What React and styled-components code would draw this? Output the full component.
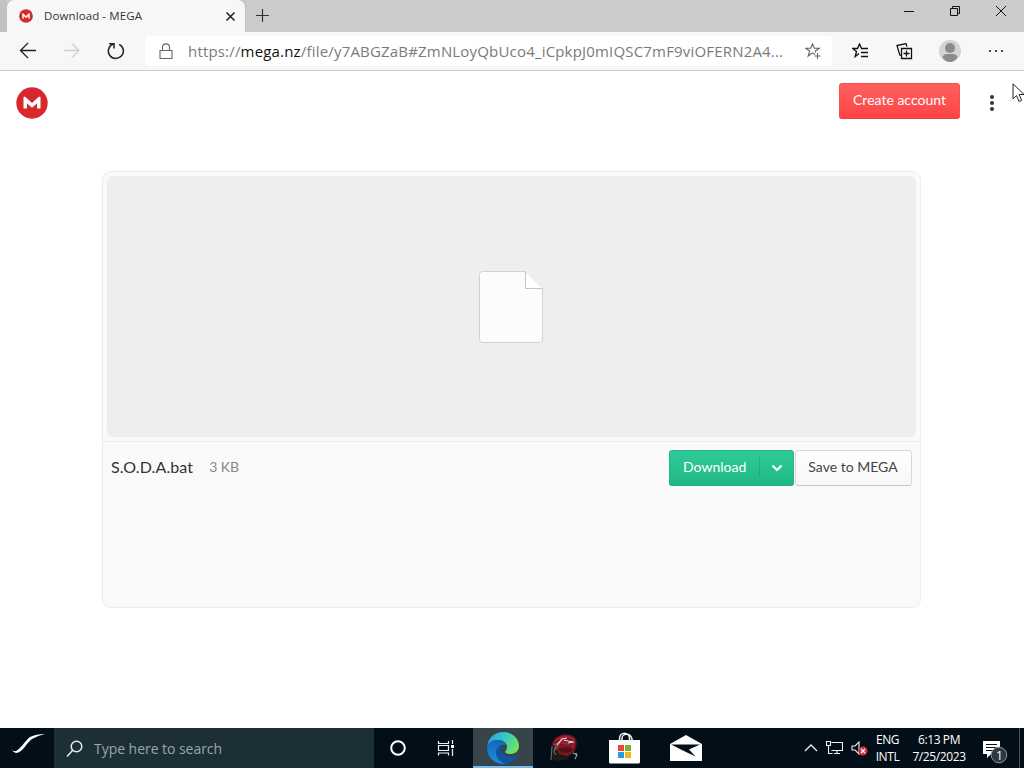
import styled, { createGlobalStyle } from "styled-components";

const GlobalStyle = createGlobalStyle`
  * { box-sizing: border-box; }
  body { margin: 0; background: #fff; overflow: hidden; }
  svg { display: block; flex: none; }
`;

const ui = `"Open Sans", "Noto Sans", sans-serif`;
const lato = `Lato, "Open Sans", sans-serif`;

const Screen = styled.div`
  position: relative;
  width: 1024px;
  height: 768px;
  display: flex;
  flex-direction: column;
  overflow: hidden;
  font-family: ${ui};
`;

const Label = styled.span`
  font-size: ${(p) => p.$size}px;
  letter-spacing: ${(p) => p.$track || 0}px;
  color: ${(p) => p.$color || "inherit"};
  line-height: ${(p) => p.$line || 20}px;
  white-space: nowrap;
`;

/* browser */

const TabStrip = styled.div`
  display: flex;
  height: 32px;
  padding-left: 7px;
  background: #cbcbcb;
  box-shadow: inset 6px 0 0 #c2c2c2;
`;

const Tab = styled.div`
  display: flex;
  align-items: center;
  width: 238px;
  padding: 0 9px 0 12px;
  border-radius: 7px 7px 0 0;
  background: #f7f7f7;
  box-shadow: 0 0 2px #aaa;
`;

const TabTitle = styled(Label)`
  flex: 1;
  margin-left: 11px;
`;

const NewTab = styled.div`
  padding: 9px 0 0 11px;
`;

const WindowButtons = styled.div`
  display: flex;
  margin-left: auto;
`;

const WindowButton = styled.div`
  display: flex;
  justify-content: center;
  width: 46px;
  padding-top: 4px;
`;

const Toolbar = styled.div`
  display: flex;
  align-items: center;
  height: 39px;
  background: #f7f7f7;
  border-bottom: 1px solid #cdcdcd;
`;

const ToolButton = styled.div`
  display: flex;
  justify-content: center;
  width: ${(p) => p.$width || 44}px;
`;

const AddressBar = styled.div`
  display: flex;
  align-items: center;
  width: 687px;
  height: 30px;
  margin-left: 2px;
  padding: 0 10px 0 12px;
  border-radius: 4px;
  background: #fff;
`;

const Url = styled(Label)`
  flex: 1;
  margin-left: 14px;
  b { font-weight: 400; color: #111; }
`;

/* page */

const Page = styled.main`
  flex: 1;
  background: #fff;
  font-family: ${lato};
`;

const PageHeader = styled.header`
  display: flex;
  align-items: center;
  height: 64px;
  padding: 0 16px;
`;

const CreateButton = styled.div`
  display: flex;
  justify-content: center;
  width: 121px;
  height: 36px;
  margin: 0 0 4px auto;
  padding-top: 7px;
  border-radius: 4px;
  background: linear-gradient(#ff6060, #fd4343);
  box-shadow: inset 0 -1px 0 #e84440, inset 0 0 0 1px #f4504c;
`;

const MenuDots = styled.div`
  display: flex;
  flex-direction: column;
  align-items: center;
  gap: 2px;
  width: 32px;
  margin-left: 16px;
  i { width: 4px; height: 4px; border-radius: 50%; background: #3f2f42; }
`;

const Card = styled.section`
  width: 819px;
  height: 437px;
  margin: 36px 0 0 102px;
  border: 1px solid #ededed;
  border-radius: 9px;
  background: #fafafa;
`;

const Preview = styled.div`
  display: flex;
  align-items: center;
  justify-content: center;
  height: 261px;
  margin: 4px;
  padding-right: 2px;
  border-radius: 6px;
  background: #eee;
`;

const FileRow = styled.div`
  display: flex;
  align-items: center;
  height: 53px;
  padding: 0 8px;
  border-top: 1px solid #ececec;
`;

const FileName = styled(Label)`
  margin: 0 0 2px;
`;

const FileSize = styled(Label)`
  flex: 1;
  margin: 0 0 2px 16px;
`;

const DownloadButton = styled.div`
  display: flex;
  width: 125px;
  height: 36px;
  padding: 7px 0 0 14px;
  border-radius: 4px;
  background: linear-gradient(#31cb9b, #1fb883);
  box-shadow: inset 0 0 0 1px #22b884, inset 0 -1px 0 #18a473;
`;

const Split = styled.div`
  width: 35px;
  height: 20px;
  margin-left: auto;
  padding: 7px 0 0 11px;
  border-left: 1px solid #22ad80;
`;

const SaveButton = styled.div`
  display: flex;
  justify-content: center;
  width: 117px;
  height: 36px;
  margin-left: 1px;
  padding: 6px 1px 0 0;
  border: 1px solid #d8d8d8;
  border-bottom-color: #c8c8c8;
  border-radius: 4px;
  background: linear-gradient(#fff, #f7f7f7);
`;

/* taskbar */

const Taskbar = styled.footer`
  display: flex;
  height: 40px;
  background: #030f18;
  color: #fff;
`;

const Task = styled.div`
  display: flex;
  align-items: center;
  justify-content: center;
  width: ${(p) => p.$width}px;
  background: ${(p) => (p.$active ? "#37454b" : "transparent")};
  box-shadow: ${(p) => (p.$active ? "inset 0 -2px 0 #76b9ed" : "none")};
`;

const Search = styled.div`
  display: flex;
  align-items: center;
  gap: 11px;
  width: 320px;
  padding-left: 12px;
  background: #1c2f36;
`;

const SearchHint = styled(Label)`
  padding-top: 2px;
`;

const Tray = styled.div`
  display: flex;
  align-items: center;
  flex: 1;
  justify-content: flex-end;
`;

const TrayText = styled.div`
  display: flex;
  flex-direction: column;
  align-items: center;
  width: ${(p) => p.$width}px;
`;

const ShowDesktop = styled.div`
  width: 5px;
  height: 40px;
  border-left: 1px solid #4b545b;
`;

const Pointer = styled.div`
  position: absolute;
  left: 1012px;
  top: 83px;
`;

const MegaLogo = ({ size }) => (
  <svg width={size} height={size} viewBox="0 0 32 32">
    <circle cx="16" cy="16" r="15.7" fill="#d9272e" />
    <path
      d="M7.5 21.5V10.3q0-.5.5-.5h1.2l6.8 6.3 6.8-6.3H24q.5 0 .5.5v11.2h-3.4v-5.2L16 20.8l-5.1-4.5v5.2z"
      fill="#fff"
    />
  </svg>
);

const Line = ({ w, h = w, d, color = "#222", stroke = 1.3, fill = "none", children }) => (
  <svg width={w} height={h} viewBox={`0 0 ${w} ${h}`} fill={fill} stroke={color} strokeWidth={stroke}>
    <path d={d} />
    {children}
  </svg>
);

const EdgeIcon = () => (
  <svg width="34" height="34" viewBox="0 0 34 34">
    <defs>
      <linearGradient id="edgeTop" x1="0" y1="0.2" x2="1" y2="0.6">
        <stop offset="0" stopColor="#2aa3dc" />
        <stop offset=".5" stopColor="#38c8c8" />
        <stop offset="1" stopColor="#74e458" />
      </linearGradient>
      <linearGradient id="edgeLeft" x1="0" y1="0" x2="0" y2="1">
        <stop offset="0" stopColor="#1468b4" />
        <stop offset="1" stopColor="#1a8fe0" />
      </linearGradient>
    </defs>
    <path d="M1.3 15C2.500 6.500 9 1 17 1c9 0 16 6 16 14 0 5-4 8-8.500 8-3 0-5.500-1-5.500-2 0-1 2-2 2-5 0-4-4-7-9-7-5 0-9 2-10.700 6z" fill="url(#edgeTop)" />
    <path d="M1 17c0-5 5-8 11-8 4 0 7.500 2 8.600 5-5-1.500-10 2.500-10 7.500 0 5.500 4 10.500 10 11C10 34.500 1 27 1 17z" fill="url(#edgeLeft)" />
    <path d="M16.500 13.500c-4 1-6.500 4-6.500 8 0 6 5 11.500 11 11 4-1 8-3.500 10-7.300-.1-.6-.7-.6-1.500-.200C24 27.500 15 24.500 15 18c0-2 .5-3.500 1.500-4.500z" fill="#0f54a6" />
  </svg>
);

const HelmetIcon = () => (
  <svg width="32" height="32" viewBox="0 0 32 32">
    <path d="M4 27C2 17 4 6 12 3c7-2 14-1 17 4 1 5 0 10-3 13l-6 7-9 2-6-1z" fill="#1d191b" />
    <path d="M4 12C7 4 14 2 21 3c5 1 7 4 7 9l-2 8-7 4-8-2-4-8z" fill="#7d1724" />
    <path d="M7 9c6-5 13-6 20-1M5 13c6-3 12-3 16 0M12 5l6 8M26 10l-2 7" fill="none" stroke="#c12a3b" strokeWidth="1" />
    <path d="M9 13l5-6 5-1M16 8l4 1 6 1M20 11l5-1" fill="none" stroke="#ddd" strokeWidth="1.2" />
    <path d="M10 17l8-2 8 2-4 3-8 1z" fill="#521019" />
    <path d="M4 14l-1 14M8 12l-2 8 2 3M7 18l4-6" fill="none" stroke="#74676a" strokeWidth="1.1" />
    <path d="M25 21l4 2-2 4M28 21l1 3" fill="none" stroke="#9ba4a6" strokeWidth="1.1" />
  </svg>
);

const StoreIcon = () => (
  <svg width="32" height="32" viewBox="0 0 32 32">
    <path d="M10.500 9V6.500c0-7 10-7 10 0V9M13 9V6c0-4 8-6 10 1v2" fill="none" stroke="#f2f5f6" strokeWidth="1.500" />
    <path d="M0 8h31v22q0 1.500-1.500 1.500h-28Q0 31.500 0 30z" fill="#fff" />
    <path d="M9 13h6v6H9z" fill="#e8492c" />
    <path d="M16 13h6v6h-6z" fill="#79b52b" />
    <path d="M9 20h6v6H9z" fill="#219de0" />
    <path d="M16 20h6v6h-6z" fill="#f3b51d" />
  </svg>
);

const Browser = () => (
  <>
    <TabStrip>
      <Tab>
        <MegaLogo size={14} />
        <TabTitle $size={11.5} $track={0.1} $color="#333">Download - MEGA</TabTitle>
        <Line w={11} d="M1.500 1.500l8 8M9.500 1.500l-8 8" stroke={1.6} />
      </Tab>
      <NewTab>
        <Line w={13} d="M6.500 0v13M0 6.500h13" stroke={1.2} color="#333" />
      </NewTab>
      <WindowButtons>
        <WindowButton>
          <Line w={12} h={16} d="M1 7.500h10" stroke={1} color="#111" />
        </WindowButton>
        <WindowButton>
          <Line w={12} h={16} d="M1.500 4.500h7v7h-7zM3.500 4.500v-2h7v7h-2" stroke={1} color="#111" />
        </WindowButton>
        <WindowButton>
          <Line w={12} h={16} d="M1 2l10 10M11 2L1 12" stroke={1} color="#111" />
        </WindowButton>
      </WindowButtons>
    </TabStrip>
    <Toolbar>
      <ToolButton $width={56}>
        <Line w={18} d="M17 8.500H2M9 1L1.500 8.500 9 16" />
      </ToolButton>
      <ToolButton $width={32}>
        <Line w={18} d="M1 8.500h15M9 1.500l7 7-7 7" color="#d0d0d0" />
      </ToolButton>
      <ToolButton $width={55}>
        <Line w={18} d="M12.200 2.300A7.500 7.500 0 1 1 6 2.100M2.200 1.700H7v4.800" stroke={1.5} />
      </ToolButton>
      <AddressBar>
        <Line w={17} d="M3 7.500h12v8H3zM5.500 7.500V4.200c0-4.500 7-4.500 7 0v3.300" color="#666" stroke={1.1} />
        <Url $size={15} $track={0.18} $color="#7a7a7a">
          https://<b>mega.nz</b>/file/y7ABGZaB#ZmNLoyQbUco4_iCpkpJ0mIQSC7mF9viOFERN2A4...
        </Url>
        <Line w={17} d="M10 11.500L7.500 9.800 3.200 13l1.500-5L.7 5.200h5L7.500.8l1.800 4.400h5l-4 2.800.5 1.500M12.500 10v6M9.500 13h6" color="#666" stroke={1.1} />
      </AddressBar>
      <ToolButton $width={56}>
        <Line w={17} d="M7 10.500L3.200 13.500l1.300-5L.8 5.500h4.700L7.500 1l2 4.500H16M9 9.500h7M9 13.500h7" stroke={1.3} color="#111" />
      </ToolButton>
      <ToolButton $width={33}>
        <Line w={17} d="M5.500 5.500h10v10h-10zM10.500 7.500v6M7.500 10.500h6M5 12.500l-1.200-.4L1 2.500l9-1.900 1 3" stroke={1.3} color="#111" />
      </ToolButton>
      <ToolButton $width={57}>
        <svg width="22" height="22" viewBox="0 0 22 22">
          <circle cx="11" cy="11" r="11" fill="#d3d3d3" />
          <circle cx="11" cy="8" r="5" fill="#8b8b8b" />
          <path d="M3.500 17.500Q4 14 8 14h6q4 0 4.500 3.500Q15 22 11 22t-7.500-4.500z" fill="#8b8b8b" />
        </svg>
      </ToolButton>
      <ToolButton $width={36}>
        <svg width="16" height="4" viewBox="0 0 16 4" fill="#222">
          <circle cx="2" cy="2" r="1.1" />
          <circle cx="8" cy="2" r="1.1" />
          <circle cx="14" cy="2" r="1.1" />
        </svg>
      </ToolButton>
    </Toolbar>
  </>
);

const FilePage = () => (
  <Page>
    <PageHeader>
      <MegaLogo size={32} />
      <CreateButton>
        <Label $size={14} $color="#fff">Create account</Label>
      </CreateButton>
      <MenuDots>
        <i /><i /><i />
      </MenuDots>
    </PageHeader>
    <Card>
      <Preview>
        <svg width="66" height="74" viewBox="0 0 66 74">
          <path d="M4.500 1.500h43l17 17v51q0 3-3 3h-57q-3 0-3-3v-65q0-3 3-3z" fill="#fcfcfc" stroke="#d2d2d2" />
          <path d="M47.500 1.500v17h17" fill="#fff" stroke="#c4c4c4" />
        </svg>
      </Preview>
      <FileRow>
        <FileName $size={16} $track={0.1} $color="#333">S.O.D.A.bat</FileName>
        <FileSize $size={14} $color="#888">3 KB</FileSize>
        <DownloadButton>
          <Label $size={14} $color="#fff">Download</Label>
          <Split>
            <Line w={12} h={8} d="M1.500 1.500L6 6l4.500-4.500" color="#fff" stroke={2.2} />
          </Split>
        </DownloadButton>
        <SaveButton>
          <Label $size={14} $color="#444">Save to MEGA</Label>
        </SaveButton>
      </FileRow>
    </Card>
  </Page>
);

const App = () => (
  <Screen>
    <GlobalStyle />
    <Browser />
    <FilePage />
    <Taskbar>
      <Task $width={54}>
        <svg width="38" height="30" viewBox="-2 0 38 30" fill="#fff">
          <path d="M1 16q3 3.500 6 1.500C13 13 15 8 20 4q6-3 15-3-7 1.500-13 5C17 9 13 19.500 6 20q-3-1-5-4z" />
        </svg>
      </Task>
      <Search>
        <Line w={17} d="M6.500 10.500L1 16.500" color="#e6eaeb" stroke={1.5}>
          <circle cx="10.500" cy="6.500" r="5.300" />
        </Line>
        <SearchHint $size={14} $track={-0.04} $color="#9ba5a8">Type here to search</SearchHint>
      </Search>
      <Task $width={48}>
        <svg width="16" height="16" viewBox="0 0 16 16">
          <circle cx="8" cy="8" r="6.800" fill="none" stroke="#fff" strokeWidth="2" />
        </svg>
      </Task>
      <Task $width={51}>
        <Line w={22} h={16} d="M1.500 1v2.500h10V1M1.500 15.500V13h10v2.500M1.500 5.500h10v5h-10zM15.500 0v4M15.500 9v7" color="#f0f2f3" stroke={1.2}>
          <path d="M14 5h3v3h-3z" fill="#fff" stroke="none" />
        </Line>
      </Task>
      <Task $width={60} $active>
        <EdgeIcon />
      </Task>
      <Task $width={62}>
        <HelmetIcon />
      </Task>
      <Task $width={60}>
        <StoreIcon />
      </Task>
      <Task $width={62}>
        <svg width="32" height="26" viewBox="0 0 32 26">
          <path d="M0 9L16 0l16 9v17H0z" fill="#fff" />
          <path d="M1 9.500h29l-11 5 6.500 7L16 17z" fill="#030f18" />
        </svg>
      </Task>
      <Tray>
        <Line w={14} h={8} d="M1 7l6-6 6 6" color="#eee" />
        <Task $width={33}>
          <Line w={17} h={16} d="M5.500 2.500h11v8h-11M8 13.500h6M11 10.500v3M.5 1.500h4v4h-4zM2.500 5.500v8h4" color="#eee" stroke={1.1} />
        </Task>
        <svg width="17" height="16" viewBox="0 0 17 16">
          <path d="M1 6h3l4-4v12l-4-4H1z" fill="none" stroke="#eee" strokeWidth="1.100" />
          <circle cx="12" cy="11" r="4.500" fill="#d0313c" />
          <path d="M10 9l4 4M14 9l-4 4" stroke="#fff" strokeWidth="1.100" />
        </svg>
        <TrayText $width={39}>
          <Label $size={12} $line={17} $track={-0.4}>ENG</Label>
          <Label $size={12} $line={17} $track={-0.4}>INTL</Label>
        </TrayText>
        <TrayText $width={64}>
          <Label $size={12} $line={17} $track={-0.4}>6:13 PM</Label>
          <Label $size={12} $line={17} $track={-0.4}>7/25/2023</Label>
        </TrayText>
        <Task $width={48}>
          <svg width="26" height="32" viewBox="0 -6 26 32">
            <path d="M1 3h17v13H9l-4 4v-4H1z" fill="#fff" />
            <path d="M4 6.500h11M4 9.500h11M4 12.500h7" stroke="#06121b" />
            <circle cx="17" cy="17" r="7.800" fill="#303940" stroke="#8a9094" />
            <text x="14" y="21.500" fontFamily="Open Sans" fontSize="12" fill="#fff">1</text>
          </svg>
        </Task>
        <ShowDesktop />
      </Tray>
    </Taskbar>
    <Pointer>
      <svg width="12" height="20" viewBox="0 0 12 20">
        <path d="M1 .8v15l3.500-3.300L7 18.500l2.600-1.200L7.200 11.500H12z" fill="#fff" stroke="#222" />
      </svg>
    </Pointer>
  </Screen>
);

export default App;
